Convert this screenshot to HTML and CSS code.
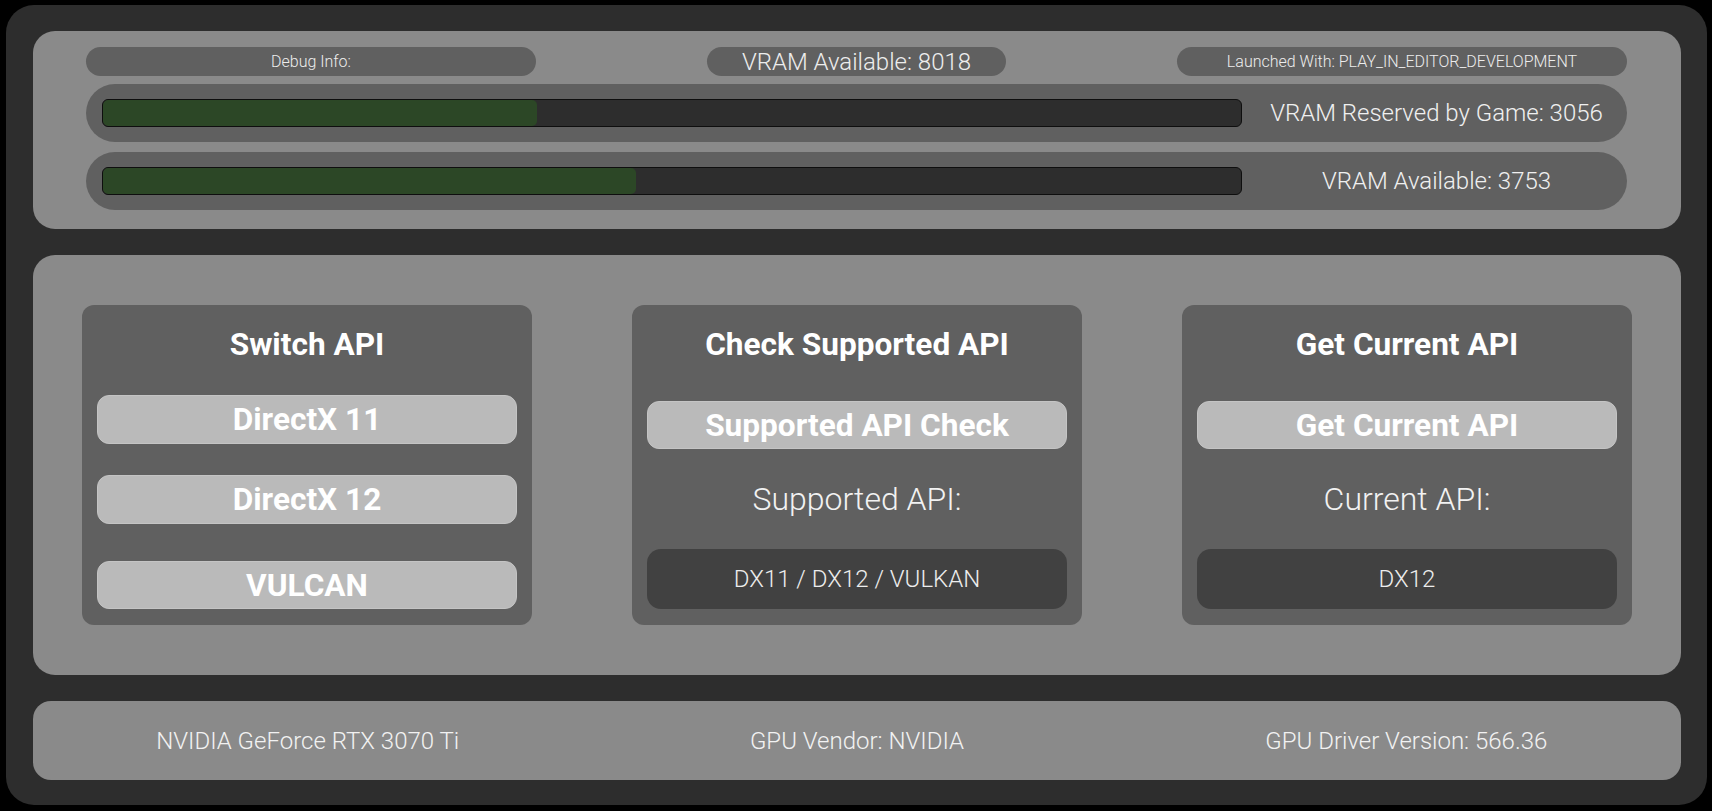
FILE: index.html
```html
<!DOCTYPE html>
<html lang="en">
<head>
<meta charset="utf-8">
<title>GPU API Debug</title>
<link rel="stylesheet" href="styles.css">
</head>
<body>
<div class="frame">
  <section class="panel top">
    <div class="info-row">
      <div class="pill pill-side">Debug Info:</div>
      <div class="pill pill-mid">VRAM Available: 8018</div>
      <div class="pill pill-side">Launched With: PLAY_IN_EDITOR_DEVELOPMENT</div>
    </div>
    <div class="bar-row">
      <div class="bar"><div class="fill" style="width:38.1%"></div></div>
      <div class="bar-label">VRAM Reserved by Game: 3056</div>
    </div>
    <div class="bar-row second">
      <div class="bar"><div class="fill" style="width:46.8%"></div></div>
      <div class="bar-label">VRAM Available: 3753</div>
    </div>
  </section>

  <section class="panel middle">
    <div class="card">
      <h2 class="card-title">Switch API</h2>
      <button class="btn b1">DirectX 11</button>
      <button class="btn b2">DirectX 12</button>
      <button class="btn b3">VULCAN</button>
    </div>
    <div class="card">
      <h2 class="card-title">Check Supported API</h2>
      <button class="btn single">Supported API Check</button>
      <div class="label">Supported API:</div>
      <div class="value">DX11 / DX12 / VULKAN</div>
    </div>
    <div class="card">
      <h2 class="card-title">Get Current API</h2>
      <button class="btn single">Get Current API</button>
      <div class="label">Current API:</div>
      <div class="value">DX12</div>
    </div>
  </section>

  <section class="panel bottom">
    <div class="spec">NVIDIA GeForce RTX 3070 Ti</div>
    <div class="spec">GPU Vendor: NVIDIA</div>
    <div class="spec">GPU Driver Version: 566.36</div>
  </section>
</div>
</body>
</html>
```

FILE: styles.css
```css
* { box-sizing: border-box; }

html, body {
  margin: 0;
  padding: 0;
  background: #000;
  font-family: Roboto, "Liberation Sans", sans-serif;
  color: #ececec;
}

.frame {
  margin: 5px 5px 6px 6px;
  height: 800px;
  background: #2d2d2d;
  border-radius: 28px;
  padding: 26px 26px 25px 27px;
  display: flex;
  flex-direction: column;
  gap: 26px;
}

.panel {
  background: #8a8a8a;
  border-radius: 22px;
}

/* top panel */
.top {
  height: 198px;
  padding: 16px 54px 19px 53px;
  display: flex;
  flex-direction: column;
}

.info-row {
  height: 29px;
  display: flex;
  justify-content: space-between;
  align-items: center;
}

.pill {
  height: 29px;
  background: #606060;
  border-radius: 15px;
  display: flex;
  align-items: center;
  justify-content: center;
  font-weight: 300;
  color: #ededed;
  white-space: nowrap;
}

.pill-side {
  width: 450px;
  font-size: 16px;
}

.pill-mid {
  width: 299px;
  font-size: 24px;
}

.bar-row {
  margin-top: 8px;
  height: 58px;
  background: #606060;
  border-radius: 29px;
  display: flex;
  align-items: center;
  padding-left: 16px;
}

.bar-row.second {
  margin-top: 10px;
}

.bar {
  width: 1140px;
  height: 28px;
  background: #2d2d2d;
  border: 1px solid #0e0e0e;
  border-radius: 6px;
  overflow: hidden;
}

.fill {
  height: 100%;
  background: #2c4726;
  border-radius: 5px;
}

.bar-label {
  flex: 1;
  text-align: center;
  font-size: 24px;
  font-weight: 300;
  color: #f0f0f0;
  padding-left: 4px;
  white-space: nowrap;
}

/* middle panel */
.middle {
  height: 420px;
  padding-top: 50px;
  display: flex;
  justify-content: center;
  align-items: flex-start;
  gap: 100px;
}

.card {
  width: 450px;
  height: 320px;
  background: #606060;
  border-radius: 12px;
  padding: 16px 15px 16px 15px;
  display: flex;
  flex-direction: column;
}

.card-title {
  margin: 0;
  height: 48px;
  line-height: 48px;
  text-align: center;
  font-size: 31.6px;
  font-weight: 700;
  color: #fff;
}

.btn {
  display: block;
  width: 100%;
  height: 49px;
  border: 1px solid #c4c4c4;
  border-radius: 12px;
  background: #bababa;
  color: #fff;
  font-family: Roboto, "Liberation Sans", sans-serif;
  font-size: 31.6px;
  font-weight: 700;
  padding: 0;
  line-height: 47px;
  text-align: center;
}

.btn.b1 { margin-top: 26px; }
.btn.b2 { margin-top: 31px; }
.btn.b3 { margin-top: 37px; height: 48px; }
.btn.single { margin-top: 32px; height: 48px; }

.label {
  flex: 1;
  display: flex;
  align-items: center;
  justify-content: center;
  font-size: 32px;
  font-weight: 300;
  color: #f2f2f2;
}

.value {
  height: 60px;
  background: #414141;
  border-radius: 14px;
  display: flex;
  align-items: center;
  justify-content: center;
  font-size: 24px;
  font-weight: 300;
  color: #ededed;
}

/* bottom panel */
.bottom {
  height: 79px;
  border-radius: 18px;
  display: grid;
  grid-template-columns: 1fr 1fr 1fr;
  align-items: center;
}

.spec {
  text-align: center;
  font-size: 24px;
  font-weight: 300;
  color: #f2f2f2;
}
```
